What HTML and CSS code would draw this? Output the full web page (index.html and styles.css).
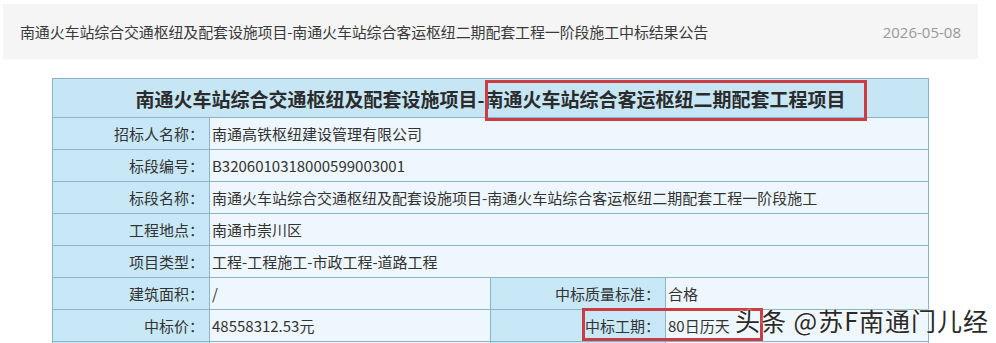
FILE: index.html
```html
<!DOCTYPE html>
<html lang="zh-CN">
<head>
<meta charset="utf-8">
<title>中标结果公告</title>
<link rel="stylesheet" href="styles.css">
</head>
<body>
<div class="page">
  <div class="list-item">
    <span class="item-title">南通火车站综合交通枢纽及配套设施项目-南通火车站综合客运枢纽二期配套工程一阶段施工中标结果公告</span>
    <span class="item-date">2026-05-08</span>
  </div>
  <div class="detail">
    <table class="info">
      <colgroup>
        <col class="c1"><col class="c2"><col class="c3"><col class="c4">
      </colgroup>
      <tr>
        <th class="head" colspan="4">南通火车站综合交通枢纽及配套设施项目-南通火车站综合客运枢纽二期配套工程项目</th>
      </tr>
      <tr><td class="lbl">招标人名称：</td><td class="val" colspan="3">南通高铁枢纽建设管理有限公司</td></tr>
      <tr><td class="lbl">标段编号：</td><td class="val" colspan="3">B3206010318000599003001</td></tr>
      <tr><td class="lbl">标段名称：</td><td class="val" colspan="3">南通火车站综合交通枢纽及配套设施项目-南通火车站综合客运枢纽二期配套工程一阶段施工</td></tr>
      <tr><td class="lbl">工程地点：</td><td class="val" colspan="3">南通市崇川区</td></tr>
      <tr><td class="lbl">项目类型：</td><td class="val" colspan="3">工程-工程施工-市政工程-道路工程</td></tr>
      <tr><td class="lbl">建筑面积：</td><td class="val">/</td><td class="lbl">中标质量标准：</td><td class="val">合格</td></tr>
      <tr><td class="lbl">中标价：</td><td class="val">48558312.53元</td><td class="lbl">中标工期：</td><td class="val">80日历天</td></tr>
      <tr class="tail"><td class="lbl"></td><td class="val"></td><td class="lbl"></td><td class="val"></td></tr>
    </table>
    <div class="mark mark-title"></div>
    <div class="mark mark-period"></div>
    <div class="watermark">头条 @苏F南通门儿经</div>
  </div>
</div>
</body>
</html>
```
FILE: styles.css
```css
html, body {
  margin: 0;
  padding: 0;
  background: #fff;
  overflow: hidden;
}
body {
  font-family: "Noto Sans CJK SC", "Noto Sans", sans-serif;
  color: #333;
}
.page {
  padding: 4px 18px 0 3px;
}
.list-item {
  height: 55px;
  background: #f5f5f5;
  display: flex;
  align-items: center;
  justify-content: space-between;
  padding: 0 17px 0 17px;
  font-size: 15px;
}
.item-title {
  color: #3a3a3a;
  letter-spacing: -0.15px;
}
.item-date {
  color: #999;
  font-family: "Open Sans", "Noto Sans", sans-serif;
  font-size: 15px;
}
.detail {
  position: relative;
  margin: 19px 0 0 49px;
  width: 876px;
}
.info {
  border-collapse: collapse;
  table-layout: fixed;
  width: 876px;
  font-size: 15px;
}
.c1 { width: 157px; }
.c2 { width: 281px; }
.c3 { width: 175px; }
.c4 { width: 263px; }
.info th, .info td {
  border: 1px solid #88b5ca;
  padding: 0;
  white-space: nowrap;
  overflow: hidden;
}
.head {
  height: 38px;
  background: #c6e6f6;
  font-size: 19px;
  font-weight: bold;
  color: #2b2b2b;
  text-align: center;
}
.info td {
  height: 31px;
}
.lbl {
  background: #c8e8f8;
  text-align: right;
  padding-right: 5px !important;
  color: #333;
}
.val {
  background: #eef7fd;
  padding-left: 2px !important;
  color: #333;
}
.mark {
  position: absolute;
  border: 3px solid #cc3d42;
  box-sizing: border-box;
}
.mark-title {
  left: 433px;
  top: 2px;
  width: 382px;
  height: 41px;
}
.mark-period {
  left: 530px;
  top: 230px;
  width: 181px;
  height: 33px;
}
.watermark {
  position: absolute;
  left: 683px;
  top: 224px;
  font-size: 25px;
  letter-spacing: 1px;
  color: #2a2a2a;
  white-space: nowrap;
  text-shadow: 0 0 2px #fff, 0 0 2px #fff;
}
```
